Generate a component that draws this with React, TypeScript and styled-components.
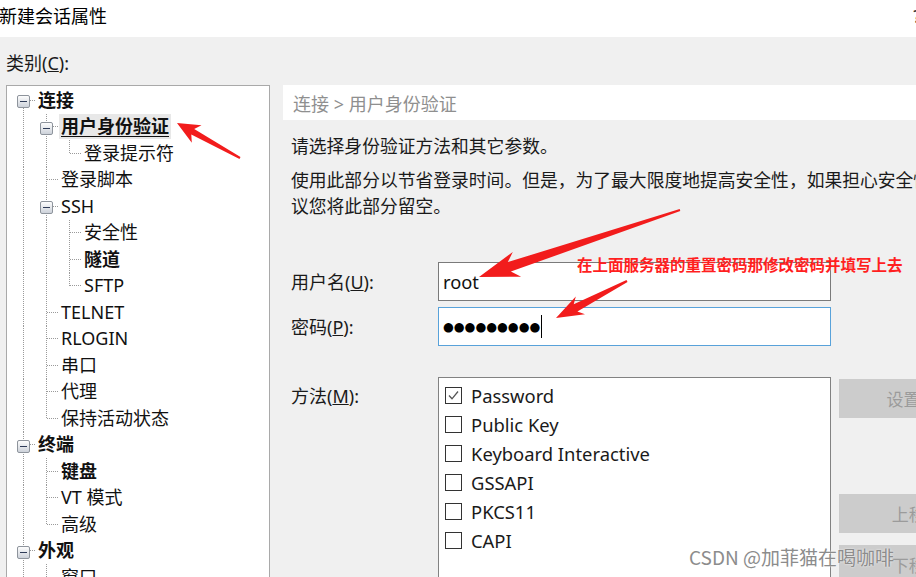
import React from 'react';
import styled, { createGlobalStyle } from 'styled-components';

type TreeNode = {
  label: string;
  bold?: boolean;
  selected?: boolean;
  children?: TreeNode[];
};

type FlatNode = {
  label: string;
  bold?: boolean;
  selected?: boolean;
  level: number;
  trail: boolean[];
  isLast: boolean;
  isFirst: boolean;
  expander: boolean;
};

const tree: TreeNode[] = [
  {
    label: '连接',
    bold: true,
    children: [
      { label: '用户身份验证', bold: true, selected: true, children: [{ label: '登录提示符' }] },
      { label: '登录脚本' },
      { label: 'SSH', children: [{ label: '安全性' }, { label: '隧道', bold: true }, { label: 'SFTP' }] },
      { label: 'TELNET' },
      { label: 'RLOGIN' },
      { label: '串口' },
      { label: '代理' },
      { label: '保持活动状态' },
    ],
  },
  {
    label: '终端',
    bold: true,
    children: [{ label: '键盘', bold: true }, { label: 'VT 模式' }, { label: '高级' }],
  },
  {
    label: '外观',
    bold: true,
    children: [{ label: '窗口' }, { label: '突出' }, { label: '边距' }],
  },
  { label: '高级', bold: true, children: [{ label: '跟踪' }, { label: '日志记录' }] },
];

const flatten = (nodes: TreeNode[], level = 0, trail: boolean[] = []): FlatNode[] =>
  nodes.flatMap((node, i) => {
    const isLast = i === nodes.length - 1;
    const self: FlatNode = {
      label: node.label,
      bold: node.bold,
      selected: node.selected,
      level,
      trail,
      isLast,
      isFirst: level === 0 && i === 0,
      expander: !!node.children,
    };
    return [self, ...(node.children ? flatten(node.children, level + 1, [...trail, !isLast]) : [])];
  });

const methods = [
  { name: 'Password', checked: true },
  { name: 'Public Key' },
  { name: 'Keyboard Interactive' },
  { name: 'GSSAPI' },
  { name: 'PKCS11' },
  { name: 'CAPI' },
];

type Pt = [number, number];

// tapered red annotation arrow
const arrowPoints = (tail: Pt, tip: Pt, headLen: number, headHalf: number, neckHalf: number, tailHalf: number) => {
  const dx = tip[0] - tail[0];
  const dy = tip[1] - tail[1];
  const len = Math.hypot(dx, dy);
  const ux = dx / len;
  const uy = dy / len;
  const nx = -uy;
  const ny = ux;
  const bx = tip[0] - ux * headLen;
  const by = tip[1] - uy * headLen;
  const wx = tip[0] - ux * headLen * 1.25;
  const wy = tip[1] - uy * headLen * 1.25;
  const pts: Pt[] = [
    [tail[0] + nx * tailHalf, tail[1] + ny * tailHalf],
    [bx + nx * neckHalf, by + ny * neckHalf],
    [wx + nx * headHalf, wy + ny * headHalf],
    tip,
    [wx - nx * headHalf, wy - ny * headHalf],
    [bx - nx * neckHalf, by - ny * neckHalf],
    [tail[0] - nx * tailHalf, tail[1] - ny * tailHalf],
  ];
  return pts.map((p) => `${p[0].toFixed(1)},${p[1].toFixed(1)}`).join(' ');
};

const GlobalStyle = createGlobalStyle`
  html, body {
    margin: 0;
    padding: 0;
    background: #f0f0f0;
    overflow: hidden;
  }
  body {
    font-family: "Noto Sans", "Noto Sans CJK SC", sans-serif;
    color: #1a1a1a;
  }
`;

const Window = styled.div`
  position: relative;
  width: 916px;
  height: 577px;
  overflow: hidden;
  display: flex;
  flex-direction: column;
  background: #f0f0f0;
`;

const TitleBar = styled.div`
  height: 37px;
  flex-shrink: 0;
  background: #fff;
  display: flex;
  justify-content: space-between;
  align-items: flex-start;
  padding-top: 4px;
  box-sizing: border-box;
  font-size: 18px;
  line-height: 24px;
  color: #000;
`;

const Title = styled.span`
  margin-left: -1px;
`;

const HelpMark = styled.span`
  margin-right: -5px;
  color: #333;
`;

const Body = styled.div`
  flex: 1;
  display: flex;
  min-height: 0;
`;

const LeftColumn = styled.div`
  width: 269px;
  flex-shrink: 0;
  padding: 13px 0 0 6px;
  box-sizing: border-box;
`;

const CategoryLabel = styled.div`
  font-size: 18px;
  line-height: 26px;
  margin-bottom: 9px;
`;

const TreeBox = styled.div`
  width: 264px;
  height: 520px;
  box-sizing: border-box;
  border: 1px solid #a9a9a9;
  background: #fff;
  padding: 1px 0 0 5px;
  overflow: hidden;
`;

const TreeRow = styled.div`
  display: flex;
  height: 26.5px;
`;

const dotV = 'repeating-linear-gradient(to bottom, #9a9a9a 0 1px, transparent 1px 2px)';
const dotH = 'repeating-linear-gradient(to right, #9a9a9a 0 1px, transparent 1px 2px)';

const Guide = styled.span<{ $up?: boolean; $down?: boolean; $right?: boolean }>`
  width: 23px;
  flex-shrink: 0;
  display: flex;
  align-items: center;
  justify-content: center;
  background-repeat: no-repeat;
  background-image: ${(p) =>
    [p.$up || p.$down ? dotV : null, p.$right ? dotH : null].filter(Boolean).join(', ') || 'none'};
  background-size: ${(p) =>
    [
      p.$up || p.$down ? `1px ${p.$up && p.$down ? '100%' : '50%'}` : null,
      p.$right ? '11px 1px' : null,
    ]
      .filter(Boolean)
      .join(', ') || 'auto'};
  background-position: ${(p) =>
    [p.$up || p.$down ? `11px ${p.$up ? '0' : '100%'}` : null, p.$right ? '12px 50%' : null]
      .filter(Boolean)
      .join(', ') || '0 0'};
`;

const Expander = styled.span`
  width: 13px;
  height: 13px;
  box-sizing: border-box;
  border: 1px solid #8e949c;
  border-radius: 2px;
  background: linear-gradient(to bottom, #fdfdfd, #cdd2da);
  display: flex;
  align-items: center;
  justify-content: center;
  margin-top: 3px;
`;

const Minus = styled.span`
  width: 7px;
  height: 1px;
  background: #2f3c58;
`;

const NodeLabel = styled.span<{ $bold?: boolean; $selected?: boolean }>`
  align-self: center;
  margin-left: 1px;
  padding: 0 2px;
  font-size: 18px;
  line-height: 25px;
  white-space: nowrap;
  font-weight: ${(p) => (p.$bold ? 700 : 400)};
  background: ${(p) => (p.$selected ? '#e8e8e8' : 'transparent')};
  text-decoration: ${(p) => (p.$selected ? 'underline' : 'none')};
  text-underline-offset: 3px;
  color: #111;
`;

const RightColumn = styled.div`
  margin-left: 14px;
  width: 720px;
  flex-shrink: 0;
  padding-top: 48px;
`;

const Breadcrumb = styled.div`
  height: 35px;
  background: #fff;
  padding-left: 10px;
  display: flex;
  align-items: center;
  font-size: 18px;
  color: #8f8f8f;
`;

const Paragraph = styled.p<{ $gap: number }>`
  margin: ${(p) => p.$gap}px 0 0 8px;
  font-size: 17.8px;
  line-height: 26px;
  white-space: nowrap;
`;

const FieldRow = styled.div<{ $gap: number; $top?: boolean }>`
  display: flex;
  align-items: ${(p) => (p.$top ? 'flex-start' : 'center')};
  margin: ${(p) => p.$gap}px 0 0 8px;
`;

const FieldLabel = styled.span<{ $offset?: number }>`
  width: 147px;
  flex-shrink: 0;
  font-size: 18px;
  line-height: 26px;
  margin-top: ${(p) => p.$offset ?? 0}px;
`;

const TextBox = styled.div<{ $focused?: boolean }>`
  width: 393px;
  height: 39px;
  box-sizing: border-box;
  background: #fff;
  border: 1px solid ${(p) => (p.$focused ? '#58a2da' : '#7a7a7a')};
  padding-left: 4px;
  display: flex;
  align-items: center;
  font-size: 18.3px;
  color: #111;
`;

const Dots = styled.span`
  font-family: "DejaVu Sans", sans-serif;
  font-size: 12.4px;
  letter-spacing: 0;
  color: #000;
`;

const Caret = styled.span`
  display: inline-block;
  width: 1px;
  height: 23px;
  background: #000;
  margin-left: 1px;
`;

const ListBox = styled.div`
  width: 393px;
  height: 220px;
  box-sizing: border-box;
  background: #fff;
  border: 1px solid #828282;
  padding: 3px 0 0 6px;
`;

const MethodItem = styled.div`
  height: 29px;
  display: flex;
  align-items: center;
  gap: 9px;
  font-size: 18.4px;
`;

const CheckBox = styled.span`
  width: 17px;
  height: 17px;
  box-sizing: border-box;
  border: 1px solid #333;
  background: #fff;
  display: flex;
  align-items: center;
  justify-content: center;
`;

const ButtonColumn = styled.div`
  margin: 2px 0 0 8px;
  display: flex;
  flex-direction: column;
`;

const SideButton = styled.button<{ $space?: number }>`
  width: 162px;
  height: 39px;
  margin-bottom: ${(p) => p.$space ?? 12}px;
  border: 1px solid #cccccc;
  background: #cccccc;
  color: #9b9b9b;
  font-family: "Noto Sans", "Noto Sans CJK SC", sans-serif;
  font-size: 17px;
  padding: 0;
`;

const Overlay = styled.svg`
  position: absolute;
  left: 0;
  top: 0;
  pointer-events: none;
`;

const Note = styled.span`
  position: absolute;
  left: 577px;
  top: 252px;
  font-family: "Noto Sans CJK SC", sans-serif;
  font-size: 15.5px;
  line-height: 24px;
  font-weight: 700;
  color: #ff1f1f;
  white-space: nowrap;
`;

const Watermark = styled.span`
  position: absolute;
  left: 689px;
  top: 544px;
  font-family: "Noto Sans CJK SC", sans-serif;
  font-size: 19px;
  line-height: 26px;
  color: #8c8c8c;
  text-shadow: 0 0 2px #fff;
  white-space: nowrap;
`;

const TreeItem = ({ node }: { node: FlatNode }) => (
  <TreeRow>
    {node.trail.map((cont, i) => (
      <Guide key={i} $up={cont} $down={cont} />
    ))}
    <Guide $up={!node.isFirst} $down={!node.isLast} $right>
      {node.expander && (
        <Expander>
          <Minus />
        </Expander>
      )}
    </Guide>
    <NodeLabel $bold={node.bold} $selected={node.selected}>
      {node.label}
    </NodeLabel>
  </TreeRow>
);

const CheckMark = () => (
  <svg width="13" height="13" viewBox="0 0 13 13">
    <polyline points="2,6.5 5,9.8 11,2.5" fill="none" stroke="#555" strokeWidth="1.3" />
  </svg>
);

export default function App() {
  const nodes = flatten(tree);
  return (
    <>
      <GlobalStyle />
      <Window>
        <TitleBar>
          <Title>新建会话属性</Title>
          <HelpMark>?</HelpMark>
        </TitleBar>
        <Body>
          <LeftColumn>
            <CategoryLabel>
              类别(<u>C</u>):
            </CategoryLabel>
            <TreeBox>
              {nodes.map((n, i) => (
                <TreeItem key={i} node={n} />
              ))}
            </TreeBox>
          </LeftColumn>
          <RightColumn>
            <Breadcrumb>连接 &gt; 用户身份验证</Breadcrumb>
            <Paragraph $gap={13}>请选择身份验证方法和其它参数。</Paragraph>
            <Paragraph $gap={8}>
              使用此部分以节省登录时间。但是，为了最大限度地提高安全性，如果担心安全性问题，建
              <br />
              议您将此部分留空。
            </Paragraph>
            <FieldRow $gap={43}>
              <FieldLabel>
                用户名(<u>U</u>):
              </FieldLabel>
              <TextBox>root</TextBox>
            </FieldRow>
            <FieldRow $gap={6}>
              <FieldLabel>
                密码(<u>P</u>):
              </FieldLabel>
              <TextBox $focused>
                <Dots>●●●●●●●●●</Dots>
                <Caret />
              </TextBox>
            </FieldRow>
            <FieldRow $gap={31} $top>
              <FieldLabel $offset={6}>
                方法(<u>M</u>):
              </FieldLabel>
              <ListBox>
                {methods.map((m) => (
                  <MethodItem key={m.name}>
                    <CheckBox>{m.checked && <CheckMark />}</CheckBox>
                    {m.name}
                  </MethodItem>
                ))}
              </ListBox>
              <ButtonColumn>
                <SideButton $space={76}>设置(S)...</SideButton>
                <SideButton>上移(U)</SideButton>
                <SideButton>下移(D)</SideButton>
              </ButtonColumn>
            </FieldRow>
          </RightColumn>
        </Body>
        <Overlay width="916" height="577" viewBox="0 0 916 577">
          <g fill="#f21c1c">
            <polygon points={arrowPoints([240, 158], [177, 123], 18, 10, 3, 1)} />
            <polygon points={arrowPoints([680, 210], [479, 277], 32, 13, 5, 1)} />
            <polygon points={arrowPoints([627, 281], [556, 318], 22, 10, 4, 1)} />
          </g>
        </Overlay>
        <Note>在上面服务器的重置密码那修改密码并填写上去</Note>
        <Watermark>CSDN @加菲猫在喝咖啡</Watermark>
      </Window>
    </>
  );
}
